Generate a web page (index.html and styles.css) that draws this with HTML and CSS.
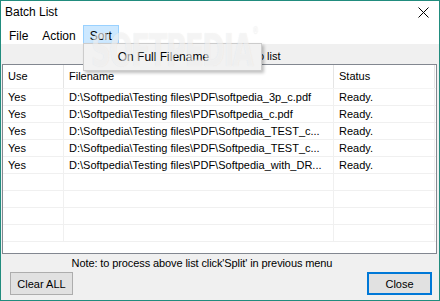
FILE: index.html
```html
<!DOCTYPE html>
<html lang="en">
<head>
    <meta charset="UTF-8">
    <title>Batch List</title>
    <link rel="stylesheet" href="styles.css">
</head>
<body>
    <div class="batch-window">
        <div class="title-bar">
            <span class="title-text">Batch List</span>
            <svg class="close-x" width="11" height="11" viewBox="0 0 11 11">
                <path d="M0.5 0.5 L10.5 10.5 M10.5 0.5 L0.5 10.5" stroke="#000" stroke-width="1" fill="none"/>
            </svg>
        </div>

        <div class="menu-bar">
            <span class="menu-item">File</span>
            <span class="menu-item">Action</span>
            <span class="menu-item menu-open">Sort
                <div class="drop-menu">
                    <div class="drop-item">On Full Filename</div>
                </div>
            </span>
        </div>

        <div class="panel">
            <div class="hint-row">Select files to add to list</div>

            <div class="list-box">
                <div class="list-row list-head">
                    <div class="cell c-use">Use</div>
                    <div class="cell c-file">Filename</div>
                    <div class="cell c-status">Status</div>
                </div>
                <div class="list-row">
                    <div class="cell c-use">Yes</div>
                    <div class="cell c-file">D:\Softpedia\Testing files\PDF\softpedia_3p_c.pdf</div>
                    <div class="cell c-status">Ready.</div>
                </div>
                <div class="list-row">
                    <div class="cell c-use">Yes</div>
                    <div class="cell c-file">D:\Softpedia\Testing files\PDF\softpedia_c.pdf</div>
                    <div class="cell c-status">Ready.</div>
                </div>
                <div class="list-row">
                    <div class="cell c-use">Yes</div>
                    <div class="cell c-file">D:\Softpedia\Testing files\PDF\Softpedia_TEST_c...</div>
                    <div class="cell c-status">Ready.</div>
                </div>
                <div class="list-row">
                    <div class="cell c-use">Yes</div>
                    <div class="cell c-file">D:\Softpedia\Testing files\PDF\Softpedia_TEST_c...</div>
                    <div class="cell c-status">Ready.</div>
                </div>
                <div class="list-row">
                    <div class="cell c-use">Yes</div>
                    <div class="cell c-file">D:\Softpedia\Testing files\PDF\Softpedia_with_DR...</div>
                    <div class="cell c-status">Ready.</div>
                </div>
                <div class="list-row"><div class="cell c-use"></div><div class="cell c-file"></div><div class="cell c-status"></div></div>
                <div class="list-row"><div class="cell c-use"></div><div class="cell c-file"></div><div class="cell c-status"></div></div>
                <div class="list-row"><div class="cell c-use"></div><div class="cell c-file"></div><div class="cell c-status"></div></div>
                <div class="list-row"><div class="cell c-use"></div><div class="cell c-file"></div><div class="cell c-status"></div></div>
            </div>

            <div class="note-row">Note: to process above list click'Split' in previous menu</div>

            <div class="button-row">
                <button class="win-button">Clear ALL</button>
                <button class="win-button win-default">Close</button>
            </div>
        </div>

        <div class="watermark">SOFTPEDIA<sup>®</sup></div>
    </div>
</body>
</html>
```

FILE: styles.css
```css
:root {
    --teal: #218c7e;
    --face: #f0f0f0;
    --grid: #f0f0f0;
    --ui: 'Liberation Sans', Arial, sans-serif;
    --list: 'Liberation Sans', Arial, sans-serif;
}

body {
    margin: 0;
    background: #fff;
}

.batch-window {
    position: relative;
    width: 440px;
    height: 301px;
    box-sizing: border-box;
    border: 1px solid var(--teal);
    display: flex;
    flex-direction: column;
    overflow: hidden;
    font-family: var(--ui);
    color: #000;
}

.title-bar {
    height: 22px;
    display: flex;
    align-items: center;
    justify-content: space-between;
    padding: 0 10px 0 4px;
    background: #fff;
    font-size: 12px;
}

.close-x {
    margin-top: 1px;
}

.menu-bar {
    height: 21px;
    display: flex;
    align-items: stretch;
    background: #fff;
    font-size: 12px;
    padding-left: 1px;
}

.menu-item {
    position: relative;
    display: flex;
    align-items: center;
    padding: 4px 6px 0;
    border: 1px solid transparent;
}

.menu-open {
    background: #cce8ff;
    border-color: #99d1ff;
    padding-top: 2px;
    margin-top: 2px;
    width: 22px;
}

.drop-menu {
    position: absolute;
    left: -1px;
    top: 17px;
    width: 179px;
    height: 28px;
    box-sizing: border-box;
    background: #f2f2f2;
    border: 1px solid #cccccc;
    box-shadow: 2px 2px 3px rgba(0, 0, 0, 0.25);
    display: flex;
    align-items: center;
    z-index: 5;
}

.drop-item {
    padding-left: 34px;
    font-size: 12px;
}

.panel {
    flex: 1;
    background: var(--face);
    display: flex;
    flex-direction: column;
}

.hint-row {
    height: 20px;
    padding-left: 164px;
    font-family: var(--list);
    font-size: 11px;
    line-height: 24px;
}

.list-box {
    margin: 0 2px 0 1px;
    height: 190px;
    box-sizing: border-box;
    background: #fff;
    border: 1px solid #828790;
    overflow: hidden;
    font-family: var(--list);
    font-size: 11px;
}

.list-row {
    display: flex;
    height: 17px;
    box-sizing: border-box;
    border-bottom: 1px solid var(--grid);
}

.list-head {
    height: 24px;
    border-bottom-color: #f4f4f4;
}

.cell {
    box-sizing: border-box;
    padding-left: 5px;
    border-right: 1px solid var(--grid);
    white-space: nowrap;
    overflow: hidden;
    line-height: 16px;
}

.list-head .cell {
    border-right-color: #e5e5e5;
    line-height: 23px;
}

.c-use {
    width: 61px;
}

.c-file {
    width: 270px;
}

.c-status {
    width: 101px;
}

.note-row {
    height: 17px;
    text-align: center;
    font-family: var(--list);
    font-size: 11px;
    line-height: 18px;
    padding-right: 36px;
    letter-spacing: -0.1px;
}

.button-row {
    display: flex;
    justify-content: space-between;
    padding: 1px 7px 0 9px;
}

.win-button {
    height: 23px;
    box-sizing: border-box;
    background: #e1e1e1;
    border: 1px solid #adadad;
    font-family: var(--list);
    font-size: 11px;
    color: #000;
    padding: 0;
    width: 63px;
}

.win-default {
    border: 2px solid #0078d7;
    width: 65px;
}

.watermark {
    position: absolute;
    left: 90px;
    top: 24px;
    font-family: 'DejaVu Sans', sans-serif;
    font-weight: bold;
    font-size: 44px;
    letter-spacing: -2px;
    color: rgba(255, 255, 255, 0.5);
    text-shadow: 0 0 1px rgba(170, 170, 170, 0.25);
    transform: scaleX(0.62);
    transform-origin: left top;
    pointer-events: none;
    z-index: 10;
}

.watermark sup {
    font-size: 10px;
    vertical-align: top;
}
```
